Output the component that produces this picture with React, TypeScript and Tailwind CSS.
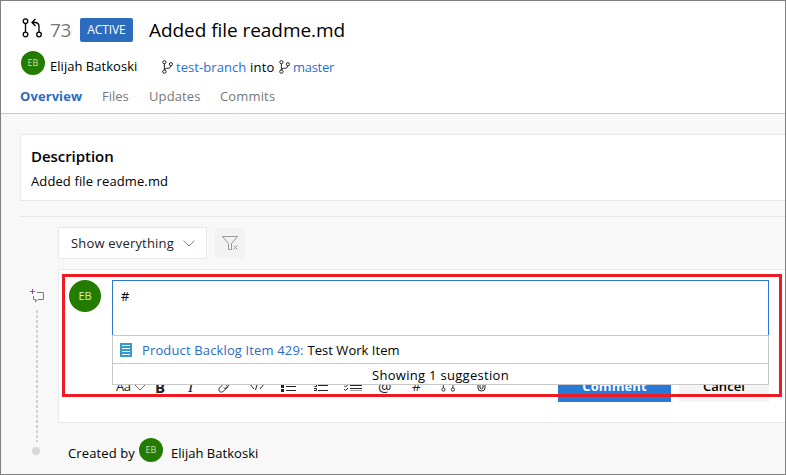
import type { ReactNode } from "react";

function PullRequestIcon({ className }: { className: string }) {
  return (
    <svg className={className} viewBox="0 0 20 20" fill="none" stroke="currentColor" strokeWidth="1.3">
      <circle cx="3.5" cy="3.2" r="2.3" />
      <circle cx="3.5" cy="16.5" r="2.3" />
      <circle cx="17" cy="16.5" r="2.3" />
      <path d="M3.5 5.500v8.700M17 14.200V8.500q0-4-4-4H10.500M13.500 1 10 4.500l3.500 3.500" />
    </svg>
  );
}

function BranchIcon() {
  return (
    <svg className="h-[14px] w-[11px] shrink-0 text-[#222]" viewBox="0 0 11 14" fill="none" stroke="currentColor">
      <circle cx="2.4" cy="2.2" r="1.6" />
      <circle cx="2.4" cy="11.6" r="1.7" />
      <circle cx="8.9" cy="4.2" r="1.6" />
      <path d="M2.400 3.800v6M8.800 6q-.300 2.200-2.600 2.300H4.500q-1.800.200-2.100 2" />
    </svg>
  );
}

function Chevron({ className }: { className: string }) {
  return (
    <svg className={"h-[7px] w-3 shrink-0 " + className} viewBox="0 0 12 7" fill="none" stroke="currentColor">
      <path d="m.5.5 5.5 5.5L11.500.5" />
    </svg>
  );
}

function Avatar({ className }: { className: string }) {
  return (
    <span className={"flex shrink-0 items-center justify-center rounded-full bg-[#237b00] " + className}>EB</span>
  );
}

function Tool({ className, children }: { className: string; children: ReactNode }) {
  return <span className={"flex h-4 shrink-0 items-center text-[#222] " + className}>{children}</span>;
}

function Header() {
  return (
    <header className="h-[113px] shrink-0 border-b border-[#c8c8c8] bg-white">
      <div className="flex h-[49px] items-center pt-[9px] pl-[21px]">
        <PullRequestIcon className="mb-[5px] h-5 w-5 text-black" />
        <span className="ml-2 w-[30px] text-[19px] tracking-[-0.4px] text-[#777]">73</span>
        <span className="flex h-6 w-[53px] items-center justify-center rounded-[2px] bg-[#2b6cbf] text-[12px] tracking-[-0.1px] text-white">ACTIVE</span>
        <h1 className="ml-4 text-[19px] tracking-[-0.05px]">Added file readme.md</h1>
      </div>
      <div className="flex h-[27px] pl-5 text-[13px] leading-[20px]">
        <Avatar className="mt-px h-6 w-6 text-[9px] text-[#c5dfbc]" />
        <span className="mt-[6px] ml-[5px] w-[112px] tracking-[0.03px]">Elijah Batkoski</span>
        <span className="mt-[10px]"><BranchIcon /></span>
        <span className="mt-[7px] ml-[3px] w-[74px] tracking-[0.06px] text-[#2b6fd0]">test-branch</span>
        <span className="mt-[7px] w-[29px] tracking-[0.2px]">into</span>
        <span className="mt-[10px]"><BranchIcon /></span>
        <span className="mt-[7px] ml-[3px] tracking-[-0.3px] text-[#2b6fd0]">master</span>
      </div>
      <nav className="flex pt-[9px] pl-[19px] text-[13px] leading-[20px] text-[#777]">
        <span className="w-[82px] font-bold tracking-[0.08px] text-[#2b6cbf]">Overview</span>
        <span className="w-[47px]">Files</span>
        <span className="w-[71px] tracking-[0.1px]">Updates</span>
        <span className="tracking-[0.15px]">Commits</span>
      </nav>
    </header>
  );
}

function Toolbar() {
  return (
    <div className="mt-[34px] flex h-[32px] pl-[4px] text-[13px]">
      <Tool className="mt-[9px] w-[39px] gap-[3px]">
        <span className="tracking-[-0.4px]">Aa</span>
        <Chevron className="text-[#666]" />
      </Tool>
      <Tool className="mt-[9px] w-[33px] text-[15px] font-bold">B</Tool>
      <Tool className="mt-[9px] w-[29px] font-['Liberation_Serif',serif] text-[16px] italic">I</Tool>
      <Tool className="mt-[8px] w-[33px]">
        <svg className="h-4 w-4" viewBox="0 0 16 16" fill="none" stroke="currentColor" strokeWidth="0.9">
          <path d="m7 5 3-3q2-1.500 3.500 0t0 3.500L9.500 10q-2 1-3-.500M9.500 7q1.500 2 0 3.500L6 13.500q-2 1.500-3.500 0t0-3.500l4-4" />
        </svg>
      </Tool>
      <Tool className="mt-[7px] w-[31px]">
        <svg className="h-3 w-[14px]" viewBox="0 0 14 12" fill="none" stroke="currentColor">
          <path d="M4 2 .7 6 4 10M10 2l3.300 4L10 10M8.500 1l-3 10" />
        </svg>
      </Tool>
      <Tool className="mt-[9px] w-[33px]">
        <svg className="h-3 w-[15px]" viewBox="0 0 15 12" fill="currentColor" shapeRendering="crispEdges">
          <path d="M0 0h3v3H0zM0 4h3v3H0zM0 8h3v3H0zM5 1h10v1H5zM5 5h10v1H5zM5 9h10v1H5z" />
        </svg>
      </Tool>
      <Tool className="mt-[9px] w-[30px]">
        <svg className="h-3 w-[14px]" viewBox="0 0 14 12" fill="none" stroke="currentColor">
          <path d="M0 .5h2.500v2M.500 3.500h2v2H.500M0 7.500h2.500v2H0M4 1.500h10M4 4.500h10M4 9.500h10" />
        </svg>
      </Tool>
      <Tool className="mt-[9px] w-[34px]">
        <svg className="h-3 w-[18px]" viewBox="0 0 18 12" fill="none" stroke="currentColor">
          <path d="m0 1 1.500 2L4 0M0 4.500l1.500 1.500L4 3.500M0 8l1.500 1.500L4 7M6 1.500h12M6 4.500h12M6 7.500h12" />
          <path stroke="#999" d="M6 9.500h12" />
        </svg>
      </Tool>
      <Tool className="mt-[8px] w-[34px] text-[15px]">@</Tool>
      <Tool className="mt-[7px] w-[29px] text-[14px]">#</Tool>
      <Tool className="mt-[7px] w-[36px]"><PullRequestIcon className="h-[14px] w-[14px]" /></Tool>
      <Tool className="mt-[7px] w-[81px]">
        <svg className="h-[14px] w-[9px]" viewBox="0 0 9 14" fill="none" stroke="currentColor">
          <path d="M1 3v7q0 3 3.500 3T8 10V3Q8 .500 5.500.500T3 3v6q0 2 1.500 2T6 9V3" />
        </svg>
      </Tool>
      <span className="flex w-[113px] shrink-0 items-center justify-center bg-[#2979d9] pt-[2px] font-bold tracking-[0.1px] text-white">Comment</span>
      <span className="ml-2 flex w-[90px] shrink-0 items-center justify-center bg-[#f4f4f4] pt-[2px] font-semibold tracking-[0.1px]">Cancel</span>
    </div>
  );
}

function CommentBox() {
  return (
    <section className="relative h-[154px] border border-r-0 border-[#e8e8e8] bg-white pt-[10px] pl-[10px]">
      <div className="flex gap-[11px]">
        <Avatar className="h-8 w-8 text-[11px] text-[#dcebd7]" />
        <div className="relative w-[657px]">
          <div className="h-[56px] border border-[#2b79d0] px-2 pt-[5px] text-[13px] leading-[20px]">#</div>
          <Toolbar />
          <div className="absolute top-[55px] left-0 w-full border border-[#c8c8c8] bg-white text-[13px]">
            <div className="flex h-[28px] items-center border-b border-[#c8c8c8] pl-[7px]">
              <svg className="h-[14px] w-3" viewBox="0 0 12 14" shapeRendering="crispEdges">
                <path fill="#339cce" d="M0 0h12v14H0z" />
                <path stroke="white" d="M2 2.500h8M2 5.500h8M2 8.500h8M2 11.500h8" />
              </svg>
              <span className="mt-[2px] ml-[10px] tracking-[0.14px] text-[#2b6cbf]">Product Backlog Item 429:</span>
              <span className="mt-[2px] ml-1 tracking-[0.03px]">Test Work Item</span>
            </div>
            <div className="flex h-[20px] items-center justify-center pt-[4px] tracking-[0.3px]">Showing 1 suggestion</div>
          </div>
        </div>
      </div>
      <div className="absolute top-1 left-[3px] h-[123px] w-[720px] border-[3px] border-[#ed1c24]" />
    </section>
  );
}

function Timeline() {
  return (
    <div className="w-[38px] shrink-0 pt-[62px]">
      <svg className="ml-[10px] h-[14px] w-[15px]" viewBox="0 0 15 14" fill="none" stroke="#777">
        <path d="M7 3.500h6.500v7H8l-2.500 2.500v-2.500H3.500V7" />
        <path stroke="#8b4f9f" d="M2.500 0v5M0 2.500h5" />
      </svg>
      <div className="mt-[7px] ml-4 h-[132px] w-[2px] bg-[repeating-linear-gradient(to_bottom,#d0d0d0_0_3px,transparent_3px_5px)]" />
      <div className="mt-[5px] ml-3 h-2 w-2 rounded-full bg-[#d8d8d8]" />
    </div>
  );
}

export default function App() {
  return (
    <div className="flex h-[475px] w-[786px] flex-col overflow-hidden border border-[#808080] bg-[#f8f8f8] font-['Open_Sans','Noto_Sans',sans-serif] text-black">
      <Header />
      <main className="pt-5 pl-[19px]">
        <section className="h-[67px] border border-r-0 border-[#e8e8e8] bg-white pl-[10px]">
          <h2 className="mt-[11px] text-[15px] leading-[20px] font-semibold tracking-[-0.05px]">Description</h2>
          <p className="mt-[5px] text-[13px] leading-[20px] tracking-[0.11px]">Added file readme.md</p>
        </section>
        <div className="mt-[15px] flex border-t border-[#e8e8e8] pt-[10px]">
          <Timeline />
          <div className="min-w-0 flex-1">
            <div className="mb-[10px] flex h-8 items-center">
              <div className="flex h-8 w-[149px] items-center border border-[#e8e8e8] bg-white pl-3 text-[13px] text-[#222]">
                <span className="mt-[2px] w-[112px] tracking-[0.18px]">Show everything</span>
                <Chevron className="text-[#6b8fa0]" />
              </div>
              <div className="ml-2 flex h-[30px] w-[30px] items-center justify-center bg-[#f2f2f2]">
                <svg className="h-4 w-4" viewBox="0 0 16 16" fill="none" stroke="#999">
                  <path d="M0 1.500h16M.500 1.500l6 7v6h3v-6l6-7M11.500 10.500l4 4M15.500 10.500l-4 4" />
                </svg>
              </div>
            </div>
            <CommentBox />
            <div className="mt-[15px] flex h-6 pl-[10px] text-[13px] leading-[20px]">
              <span className="mt-[5px] w-[71px] tracking-[0.12px]">Created by</span>
              <Avatar className="h-6 w-6 text-[9px] text-[#c5dfbc]" />
              <span className="mt-[5px] ml-2 tracking-[0.03px]">Elijah Batkoski</span>
            </div>
          </div>
        </div>
      </main>
    </div>
  );
}
